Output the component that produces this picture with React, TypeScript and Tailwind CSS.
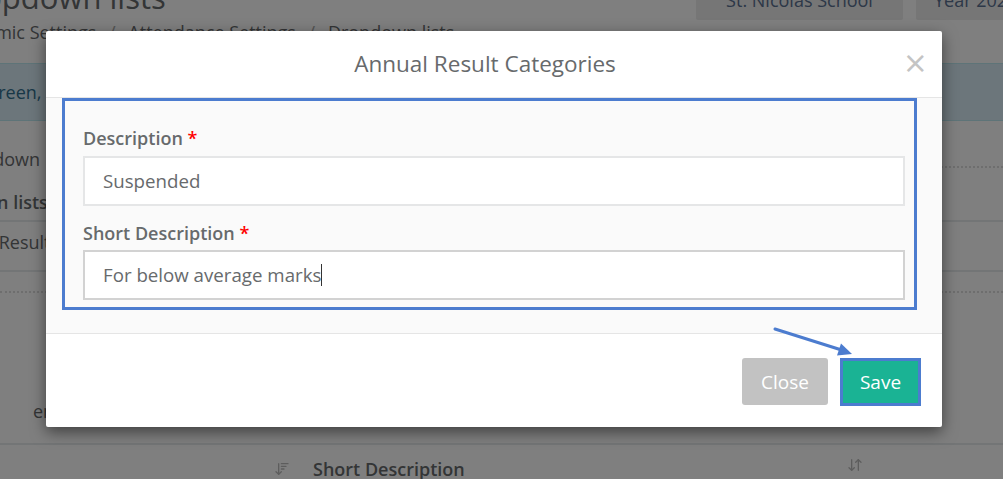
import React from "react";
import { ArrowDownUp, ArrowDownWideNarrow } from "lucide-react";

export default function App() {
  return (
    <div className="relative w-[1003px] h-[479px] overflow-hidden bg-white font-['Open_Sans',sans-serif] text-[#676a6c]">
      {/* underlying page */}
      <div className="flex flex-col">
        <div className="flex h-[63px]">
          <div className="flex-1 flex flex-col">
            <div className="-mt-[21px] -ml-[52px] text-[31px] leading-[36px] whitespace-nowrap">Dropdown lists</div>
            <div className="mt-[4px] -ml-[56px] text-[18px] leading-[26px] whitespace-nowrap">
              Academic Settings <span className="mx-[8px] text-[#aaa]">/</span> Attendance Settings <span className="mx-[8px] text-[#aaa]">/</span> Dropdown lists
            </div>
          </div>
          <div className="flex gap-[13px] items-start -mt-[24px] -mr-[33px] shrink-0">
            <div className="w-[207px] h-[44px] bg-[#ececec] rounded-[2px] flex items-end justify-center pb-[8px] text-[18px] leading-[24px] text-[#5a7090]">St. Nicolas School</div>
            <div className="w-[120px] h-[44px] bg-[#ececec] rounded-[2px] flex items-end pl-[18px] pb-[8px] text-[18px] leading-[24px] text-[#5a7090] whitespace-nowrap">Year 2024</div>
          </div>
        </div>
        <div className="h-[58px] bg-[#d9edf7] border-y border-[#bce8f1] flex items-center">
          <span className="-ml-[19px] text-[18px] text-[#31708f] whitespace-nowrap">screen, you can manage the values of the dropdown lists.</span>
        </div>
        <div className="h-[41px] flex items-end">
          <span className="-ml-[49px] mb-[-10px] text-[18px] leading-[26px] whitespace-nowrap">Dropdown</span>
          <div className="flex-1 ml-[20px] border-b-2 border-dotted border-[#ddd] mb-[-6px]" />
        </div>
        <div className="h-[60px] flex items-center pt-[22px] border-b-2 border-[#e7eaec]">
          <span className="-ml-[83px] text-[18px] font-semibold whitespace-nowrap">Dropdown lists</span>
        </div>
        <div className="h-[50px] flex items-center pb-[8px] border-b-2 border-[#e7eaec]">
          <span className="-ml-[65px] text-[18px] whitespace-nowrap">Annual Result Categories</span>
        </div>
        <div className="h-[21px] border-b-2 border-dotted border-[#ddd]" />
        <div className="h-[152px] flex items-end pb-[18px] border-b-2 border-[#e7eaec]">
          <span className="ml-[33px] text-[18px] whitespace-nowrap">entries</span>
        </div>
        <div className="h-[40px] flex items-center pt-[8px] text-[18px] font-semibold">
          <span className="-ml-[108px] w-[398px] shrink-0 flex justify-between items-center">
            <span>Description</span>
            <ArrowDownWideNarrow size={16} className="text-[#bbb]" />
          </span>
          <span className="ml-[23px] flex-1 flex justify-between items-center pr-[140px]">
            <span>Short Description</span>
            <ArrowDownUp size={16} className="text-[#bbb] -mt-[8px]" />
          </span>
        </div>
      </div>

      {/* backdrop */}
      <div className="absolute inset-0 bg-black/50" />

      {/* modal */}
      <div className="absolute left-[46px] top-[31px] w-[896px] bg-white rounded-[2px] shadow-[0_5px_15px_rgba(0,0,0,0.5)]">
        <div className="relative h-[67px] flex items-center justify-center pr-[18px] border-b border-[#e5e5e5]">
          <div className="text-[22.5px] leading-[30px] text-[#676a6c]">Annual Result Categories</div>
          <div className="absolute right-[14px] top-[17px] text-[30px] leading-[30px] text-[#c4c4c4] font-['DejaVu_Sans',sans-serif]">×</div>
        </div>
        <div className="relative bg-[#fafafa] px-[37px] pt-[27px] pb-[33px] border-b border-[#e5e5e5]">
          <div className="text-[18px] leading-[26px] font-semibold text-[#676a6c] mb-[5px]">
            Description <span className="text-[#f00]">*</span>
          </div>
          <div className="h-[50px] bg-white border-2 border-[#e5e6e7] flex items-center pl-[18px] text-[18.7px] text-[#676a6c]">
            Suspended
          </div>
          <div className="mt-[14px] text-[18px] leading-[26px] font-semibold text-[#676a6c] mb-[4px]">
            Short Description <span className="text-[#f00]">*</span>
          </div>
          <div className="h-[50px] bg-white border-2 border-[#d2d2d2] flex items-center pl-[18px] text-[18.7px] text-[#676a6c]">
            <span>For below average marks</span>
            <span className="w-px h-[22px] bg-[#333]" />
          </div>
          <div className="absolute left-[16px] top-0 w-[855px] h-[212px] border-[3px] border-[#4c7ccf]" />
        </div>
        <div className="flex justify-end items-start gap-[12px] pt-[24px] pb-[21px] pr-[21px]">
          <div className="w-[86px] h-[47px] rounded-[3px] bg-[#c2c2c2] text-white text-[19px] flex items-center justify-center pt-[2px]">Close</div>
          <div className="w-[81px] h-[48px] border-[3px] border-[#4c7ccf] bg-[#1ab394] text-white text-[19px] flex items-center justify-center pt-[1px]">Save</div>
        </div>
      </div>

      {/* annotation arrow */}
      <svg className="absolute left-0 top-0" width="1003" height="479" viewBox="0 0 1003 479">
        <line x1="775" y1="329" x2="840" y2="349.5" stroke="#4c7ccf" strokeWidth="3" strokeLinecap="round" />
        <polygon points="852,354 837,355.5 841,343.5" fill="#4c7ccf" />
      </svg>
    </div>
  );
}
